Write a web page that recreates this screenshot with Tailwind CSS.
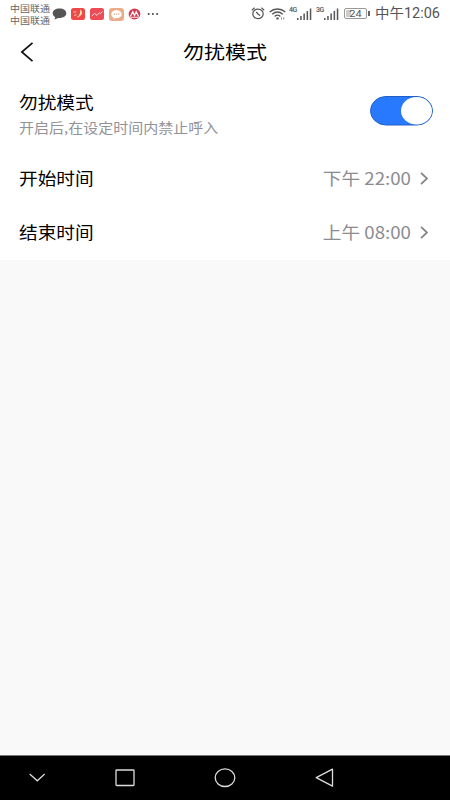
<!DOCTYPE html>
<html lang="zh-CN">
   <head>
      <meta charset="UTF-8" />
      <meta name="viewport" content="width=device-width, initial-scale=1.0" />
      <script src="https://cdn.jsdelivr.net/npm/@tailwindcss/browser@4"></script>
      <title>勿扰模式</title>
   </head>

   <body class="h-screen flex flex-col overflow-hidden bg-[#f9f9f9] text-black font-['Noto_Sans_CJK_SC',sans-serif]">
      <!-- Status bar -->
      <div class="h-7 shrink-0 bg-white flex items-center pl-2.5 pr-2.5 text-[#555]">
         <div class="w-10 text-[10px] leading-3 -mt-px whitespace-nowrap text-[#666]">
            <p class="scale-y-90">中国联通</p>
            <p class="scale-y-90">中国联通</p>
         </div>
         <div class="flex items-center ml-0.5">
            <svg class="w-[15px] h-3" viewBox="0 0 15 12">
               <path d="M7.500 .5C3.600.5.7 2.600.7 5.200c0 1.700 1 3 2.600 3.900L2.400 11.600l4-1.700c4.500.300 7.900-1.800 7.900-4.700C14.300 2.600 11.400.5 7.500.5z" fill="#555" />
            </svg>
            <svg class="w-3.5 h-3 ml-1" viewBox="0 0 14 12">
               <rect width="14" height="12" rx="2.500" fill="#ee4848" />
               <path d="M2.300 4h3M3 7.500l2.500-.8" stroke="#ffc9a8" stroke-width="1" fill="none" />
               <path d="M9 1.500c3.500 2 2.500 6.500-3.500 8.300 3-2.500 4.300-5 3.500-8.300z" fill="#ffe9b5" />
            </svg>
            <svg class="w-3.5 h-3 ml-[5px]" viewBox="0 0 14 12">
               <rect width="14" height="12" rx="2.500" fill="#ed4b56" />
               <path d="M1.800 8l2.700-2.500L7 7.300l2.500-2.600 1 .8 2-2" stroke="#ffe0e0" stroke-width="1" fill="none" />
            </svg>
            <svg class="w-[15px] h-[13px] ml-[5px]" viewBox="0 0 15 13">
               <rect width="15" height="13" rx="3" fill="#e9ad8c" />
               <path d="M7.500 2.200C4.500 2.200 2.300 3.900 2.300 6.200c0 1.600 1 2.900 2.500 3.500l-.3 1.300 2-.9c3.500.3 6.200-1.300 6.200-3.900 0-2.300-2.200-4-5.200-4z" fill="#fff" />
               <path d="M4.700 6.200h1.200M6.900 6.200h1.200M9.100 6.200h1.200" stroke="#dd9c7c" stroke-width="1.200" />
            </svg>
            <svg class="w-[13px] h-3 ml-1" viewBox="0 0 13 12">
               <ellipse cx="6.500" cy="6" rx="5.900" ry="5.400" fill="#d23a50" />
               <path d="M2.400 8.500L4.800 3.700 6.500 7.500 8.200 3.700 10.600 8.500" stroke="#fff" stroke-width="1.200" fill="none" />
               <path d="M2.500 9.300h8" stroke="#fff" stroke-width=".8" />
            </svg>
            <svg class="w-3 h-1 ml-1.5 -mt-px" viewBox="0 0 12 4" fill="#444">
               <circle cx="1.700" cy="2" r="1" />
               <circle cx="5.900" cy="2" r="1" />
               <circle cx="10.100" cy="2" r="1" />
            </svg>
         </div>

         <div class="flex items-center ml-auto -mt-px">
            <!-- Alarm -->
            <svg class="w-3.5 h-[13px]" viewBox="0 0 14 13" fill="none" stroke="#555" stroke-width="1.200">
               <ellipse cx="7" cy="6.900" rx="5.200" ry="4.800" />
               <path d="M.8 3.200L3.600.8M13.200 3.200L10.400.8M5.300 5l1.900 2.200 2 1.300" />
            </svg>
            <!-- Wi-Fi -->
            <svg class="w-[17px] h-3 ml-1" viewBox="0 0 17 12" fill="none" stroke="#555" stroke-width="1.300">
               <path d="M.7 4C5.200 0 11.800 0 16.300 4M3.200 6.200c3.200-2.700 7.400-2.700 10.600 0M5.600 8.400c1.800-1.500 4-1.500 5.800 0" />
               <circle cx="8.500" cy="10.400" r="1.200" fill="#555" stroke="none" />
               <path d="M12.500 9.500v2M14.800 9.500v2" stroke-width="1" stroke="#888" />
            </svg>
            <!-- Signals -->
            <div class="flex ml-[3px]">
               <span class="text-[7px] leading-[6px] font-medium font-[Roboto,sans-serif] w-2 tracking-tighter">4G</span>
               <svg class="w-[15px] h-3 mt-px" viewBox="0 0 15 12" fill="#555">
                  <path d="M0 10h1.500v2H0zM3.200 8h1.500v4H3.200zM6.400 5.500h1.500V12H6.400zM9.600 3h1.500v9H9.600zM12.800.5h1.500V12h-1.500z" />
               </svg>
            </div>
            <div class="flex ml-1">
               <span class="text-[7px] leading-[6px] font-medium font-[Roboto,sans-serif] w-2 tracking-tighter">3G</span>
               <svg class="w-[15px] h-3 mt-px" viewBox="0 0 15 12" fill="#555">
                  <path d="M0 10h1.500v2H0zM3.200 8h1.500v4H3.200zM6.400 5.500h1.500V12H6.400zM9.600 3h1.500v9H9.600zM12.800.5h1.500V12h-1.500z" />
               </svg>
            </div>
            <!-- Battery -->
            <div class="flex items-center ml-[5px]">
               <div class="w-[23px] h-[11px] border border-[#999] rounded-[2px] p-px">
                  <div class="w-full h-full bg-linear-to-r from-[#ccc] from-25% to-white to-25% flex items-center justify-center text-[11px] leading-none font-[Roboto,sans-serif]"><span class="scale-y-90">24</span></div>
               </div>
               <div class="w-0.5 h-[5px] ml-px bg-[#666]"></div>
            </div>
            <span class="ml-[5px] text-[14.500px] leading-5 scale-y-95 whitespace-nowrap font-[Roboto,'Noto_Sans_CJK_SC',sans-serif]">中午12:06</span>
         </div>
      </div>

      <!-- Header -->
      <header class="h-[47px] shrink-0 bg-white grid grid-cols-3 items-center px-5">
         <svg class="w-3.5 h-5" viewBox="0 0 14 20" fill="none" stroke="#111" stroke-width="1.700">
            <path d="M12.500 .8L1.800 10l10.700 9.200" />
         </svg>
         <h1 class="text-[21px] leading-7 -mt-0.5 text-center scale-y-[.89] whitespace-nowrap">勿扰模式</h1>
      </header>

      <!-- Settings -->
      <main class="h-[185px] shrink-0 bg-white pl-[19px] pr-[17px]">
         <div class="h-[76px] flex items-center justify-between">
            <div class="pt-1">
               <h2 class="text-[18.700px] leading-[26px] scale-y-[.89]">勿扰模式</h2>
               <p class="text-[15px] leading-[26px] scale-y-[.89] text-[#929297]">开启后,在设定时间内禁止呼入</p>
            </div>
            <svg class="w-[63px] h-[30px] -mt-1" viewBox="0 0 63 30">
               <rect x=".5" y=".5" width="62" height="28.500" rx="15.500" ry="14.250" fill="#2979ff" stroke="#225fc4" />
               <ellipse cx="46.500" cy="14.800" rx="15.500" ry="13.800" fill="#fff" />
            </svg>
         </div>
         <div class="h-[54px] flex items-center">
            <span class="text-[18.700px] leading-7 scale-y-[.89]">开始时间</span>
            <span class="ml-auto text-[18.700px] leading-7 scale-y-[.89] text-[#8c8c90]">下午 22:00</span>
            <svg class="w-2 h-[13px] ml-[9px] mr-[5px]" viewBox="0 0 8 13" fill="none" stroke="#858589" stroke-width="1.800">
               <path d="M1 .9L7 6.500 1 12.100" />
            </svg>
         </div>
         <div class="h-[54px] flex items-center">
            <span class="text-[18.700px] leading-7 scale-y-[.89]">结束时间</span>
            <span class="ml-auto text-[18.700px] leading-7 scale-y-[.89] text-[#8c8c90]">上午 08:00</span>
            <svg class="w-2 h-[13px] ml-[9px] mr-[5px]" viewBox="0 0 8 13" fill="none" stroke="#858589" stroke-width="1.800">
               <path d="M1 .9L7 6.500 1 12.100" />
            </svg>
         </div>
      </main>

      <!-- Navigation bar -->
      <nav class="mt-auto h-[45px] shrink-0 bg-black border-t border-[#777] flex items-center pl-[29px]">
         <svg class="w-4 h-2.5" viewBox="0 0 16 10" fill="none" stroke="#ddd" stroke-width="1.300">
            <path d="M.7 1L8.300 7.800 15.700 1" />
         </svg>
         <svg class="w-5 h-[18px] ml-[70px]" viewBox="0 0 20 18" fill="none" stroke="#ddd" stroke-width="1.300">
            <rect x="1" y="1" width="18" height="15.500" rx=".8" />
         </svg>
         <svg class="w-[22px] h-5 ml-[79px]" viewBox="0 0 22 20" fill="none" stroke="#ddd" stroke-width="1.300">
            <ellipse cx="11" cy="9.700" rx="9.800" ry="8.800" />
         </svg>
         <svg class="w-[19px] h-5 ml-[79px]" viewBox="0 0 19 20" fill="none" stroke="#ddd" stroke-width="1.300" stroke-linejoin="round">
            <path d="M17.500 1.200v17L1.200 9.700z" />
         </svg>
      </nav>
   </body>
</html>
